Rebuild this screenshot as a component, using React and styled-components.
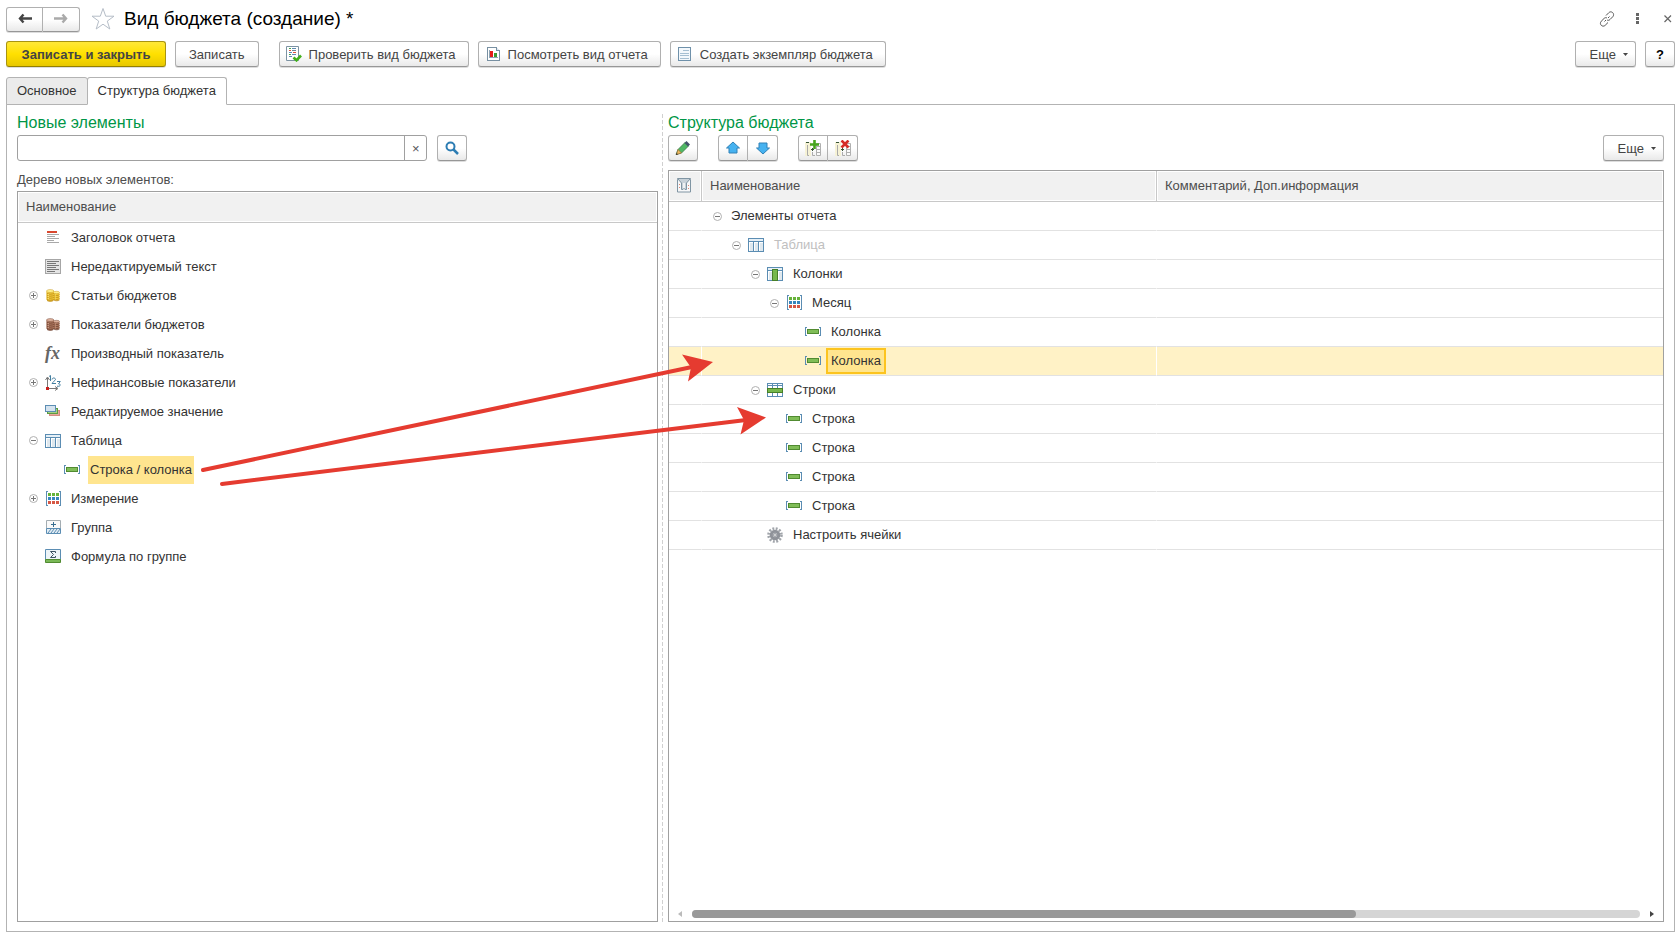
import React, { useState } from "react";
import styled, { createGlobalStyle } from "styled-components";

const COLORS = {
  text: "#333333",
  button: "#444444",
  muted: "#4d4d4d",
  green: "#009646",
  border: "#a0a0a0",
  frame: "#b3b3b3",
  line: "#e2e2e2",
  blue: "#5b8db3",
  arrow: "#e53b30",
};

const newItems = [
  { label: "Заголовок отчета", icon: "title" },
  { label: "Нередактируемый текст", icon: "text" },
  { label: "Статьи бюджетов", icon: "gold", toggle: "plus" },
  { label: "Показатели бюджетов", icon: "bronze", toggle: "plus" },
  { label: "Производный показатель", icon: "fx" },
  { label: "Нефинансовые показатели", icon: "axes", toggle: "plus" },
  { label: "Редактируемое значение", icon: "layers" },
  { label: "Таблица", icon: "table", toggle: "minus" },
  { label: "Строка / колонка", icon: "cell", level: 1, marked: true },
  { label: "Измерение", icon: "dimension", toggle: "plus" },
  { label: "Группа", icon: "group" },
  { label: "Формула по группе", icon: "sum" },
];

const structure = [
  { label: "Элементы отчета", toggle: "minus", level: 0 },
  { label: "Таблица", icon: "table", toggle: "minus", level: 1, dim: true },
  { label: "Колонки", icon: "columns", toggle: "minus", level: 2 },
  { label: "Месяц", icon: "dimension", toggle: "minus", level: 3 },
  { label: "Колонка", icon: "cell", level: 4 },
  { label: "Колонка", icon: "cell", level: 4 },
  { label: "Строки", icon: "rows", toggle: "minus", level: 2 },
  { label: "Строка", icon: "cell", level: 3 },
  { label: "Строка", icon: "cell", level: 3 },
  { label: "Строка", icon: "cell", level: 3 },
  { label: "Строка", icon: "cell", level: 3 },
  { label: "Настроить ячейки", icon: "gear", level: 2 },
];

const Coins = ({ light, mid, dark }) => (
  <>
    <path d="M8.500 4.500v7c1 1.500 5 1.500 6 0v-7z" fill={mid} />
    <path d="M8.500 6.500c1 1.300 5 1.300 6 0M8.500 8.500c1 1.300 5 1.300 6 0M8.500 10.500c1 1.300 5 1.300 6 0M9 12c1 1 4.500 1 5.500 0" stroke={dark} fill="none" strokeWidth="0.8" />
    <ellipse cx="11.500" cy="4.500" rx="3" ry="1.200" fill={light} stroke={dark} strokeWidth="0.4" />
    <path d="M1.500 3v8.500c1 2.500 6.500 2.500 7.500 0V3z" fill={mid} />
    <path d="M1.500 5c1 1.600 6.500 1.600 7.500 0M1.500 7c1 1.600 6.500 1.600 7.500 0M1.500 9c1 1.600 6.500 1.600 7.500 0M1.500 11c1 1.600 6.500 1.600 7.500 0M2 12.500c1.500 1 5 1 6.500 0" stroke={dark} fill="none" strokeWidth="0.8" />
    <ellipse cx="5.200" cy="3" rx="3.700" ry="1.500" fill={light} stroke={dark} strokeWidth="0.4" />
    <path d="M3.500 6v6M10.500 6.500v5" stroke={light} opacity="0.7" strokeDasharray="1.200 0.800" />
  </>
);

const TableBase = () => (
  <>
    <path d="M0.500 1.500h15v13h-15z" fill="#fff" stroke={COLORS.blue} />
    <path d="M1 2h14v2H1z" fill="#e6f0f7" />
    <path d="M2 6h3v8H2zM7 6h3v8H7zM12 6h3v8h-3z" fill="#dfe8ee" />
    <path d="M1 4.500h14M5.500 5v9M10.500 5v9" stroke={COLORS.blue} />
  </>
);

const TreeSheet = () => (
  <>
    <path d="M0 2h6v14H0z" fill="#f6f2d6" />
    <path d="M1 2.500h3M6 9.500h3M7.500 8v3" stroke="#355335" />
    <path d="M2.500 5v10.500H4M7.500 12v3.500H10" fill="none" stroke="#aaa" />
    <path d="M11.500 3.500h4v12h-4zM11 6.500h5M11 9.500h5M11 12.500h5" fill="#fafafa" stroke="#b0b0b0" />
  </>
);

// pixel-aligned icons
const drawings = {
  title: (
    <>
      <path d="M2 1h10v2H2z" fill="#d9482f" />
      <path d="M2 4.500h12M2 6.500h8M2 8.500h12M2 10.500h7M2 12.500h12" stroke="#a9a9a9" />
    </>
  ),
  text: (
    <>
      <path d="M0.500 0.500h15v14h-15z" fill="#e4e4e4" stroke="#a6a6a6" />
      <path d="M2 2.500h12M2 4.500h9M2 6.500h12M2 8.500h9M2 10.500h12M2 12.500h8" stroke="#777" />
    </>
  ),
  layers: (
    <>
      <path d="M4.500 6.500h10v5h-10z" fill="#e7a99d" stroke="#d38d82" />
      <path d="M2.500 4.500h10v5h-10z" fill="#a5cf83" stroke="#5d9b41" />
      <path d="M0.500 1.500h10v6h-10z" fill="#d5e3ef" stroke={COLORS.blue} />
    </>
  ),
  table: <TableBase />,
  columns: (
    <>
      <TableBase />
      <path d="M5.500 3.500h5v11h-5z" fill="#76b84c" stroke="#477f28" />
    </>
  ),
  rows: (
    <>
      <path d="M0.500 1.500h15v13h-15z" fill="#fff" stroke={COLORS.blue} />
      <path d="M1 3.500h14M5.500 2v12M10.500 2v12" stroke={COLORS.blue} />
      <path d="M0.500 6.500h15v4h-15z" fill="#76b84c" stroke="#477f28" />
    </>
  ),
  cell: (
    <>
      <path d="M2 3.500H0.500v8H2M14 3.500h1.500v8H14" fill="none" stroke={COLORS.blue} />
      <path d="M2.500 5.500h11v4h-11z" fill="#80bd57" stroke="#518b31" />
    </>
  ),
  dimension: (
    <>
      <path d="M3 0.500H1.500v14H3M14 0.500h1.500v14H14" fill="none" stroke={COLORS.blue} />
      <path d="M3 2h3v3H3zM7 2h3v3H7zM11 2h3v3h-3z" fill="#66b33a" />
      <path d="M3 6h3v3H3zM7 6h3v3H7zM11 6h3v3h-3z" fill="#3786bd" />
      <path d="M3 10h3v3H3zM7 10h3v3H7zM11 10h3v3h-3z" fill="#d65744" />
    </>
  ),
  chart: (
    <>
      <path d="M2.500 1.500h9l3 3v10h-12z" fill="#fff" stroke="#7890a2" />
      <path d="M11.500 1.500v3h3" fill="#dce6ee" stroke="#7890a2" />
      <path d="M4.500 4v7h8" fill="none" stroke="#8fa5b5" />
      <path d="M5 5h3v6H5z" fill="#e61e19" />
      <path d="M9 7h3v4H9z" fill="#3c9c32" />
    </>
  ),
  sheet: (
    <>
      <path d="M1.500 1.500h12v13h-12z" fill="#f3f8fc" stroke="#6f91aa" />
      <path d="M6 4.500h6M3 7.500h9M3 9.500h9M3 12.500h9" stroke="#a5bfd2" />
    </>
  ),
};

const smooth = {
  gold: <Coins light="#fff08a" mid="#f4cd3c" dark="#b98512" />,
  bronze: <Coins light="#dcb09b" mid="#b37c63" dark="#673b2b" />,
  axes: (
    <>
      <path d="M2.500 13V3M3 13.500h9" stroke="#777" />
      <path d="M0.500 5l2-3 2 3M10 11.500l3 2-3 2" fill="none" stroke="#777" />
      <path d="M1 12h3v3H1z" fill="#c8201d" />
      <path d="M4 1.500l1.500-1V6" fill="none" stroke="#437e9f" />
      <path d="M7 4.500c0-2 3.500-2 3.500 0 0 1-3.500 3-3.500 4h4" fill="none" stroke="#437e9f" />
      <path d="M12 6.500h3.300l-1.800 2.300c2.500 0 2.500 3.200-1.500 2.400" fill="none" stroke="#437e9f" />
    </>
  ),
  group: (
    <>
      <path d="M1.500 0.500h14v8h-14z" fill="#fafafa" stroke="#a4adb2" />
      <path d="M8.500 2v5M6 4.500h5" stroke="#386e91" />
      <path d="M1.500 8.500h14v5h-14z" fill="#e3edf4" stroke={COLORS.blue} />
      <path d="M3 13l3-4M6 13l3-4M9 13l3-4M12 13l3-4" stroke={COLORS.blue} />
    </>
  ),
  sum: (
    <>
      <path d="M0.500 0.500h15v10h-15z" fill="#edf4f8" stroke={COLORS.blue} />
      <path d="M10.500 4V2.500H5.500l3 3-3 3h5V7" fill="none" stroke="#3c5362" />
      <path d="M0.500 10.500h15v3h-15z" fill="#79b856" stroke="#518b31" />
    </>
  ),
  check: (
    <>
      <path d="M0.500 0.500h12v14h-12z" fill="#fff" stroke="#7c93a3" />
      <path d="M3 2.500h2M3 8.500h2" stroke="#46a447" />
      <path d="M6 2.500h4M3 6.500h3M6 8.500h4M3 10.500h3" stroke="#5f8bb1" />
      <path d="M3 4.500h2M7 6.500h3" stroke="#e0523c" />
      <path d="M6 4.500h4" stroke="#6f8799" />
      <path d="M7.500 11.500l3 2.800 4.500-4.800" fill="none" stroke="#43b01c" strokeWidth="2.600" />
    </>
  ),
  funnel: (
    <>
      <path d="M1.500 2.500h13v12.500h-13z" fill="#f7f8f9" stroke="#8095a3" />
      <path d="M1.500 1.500h13l-4 4.500v6.500h-1.500l-1-1-1 1H5.500V6z" fill="#c7d1d8" stroke="#8095a3" />
      <path d="M7 6h2v5H7z" fill="#f0f2f3" />
      <path d="M3 7h1v1H3zM3 10h1v1H3zM12 8h1v1h-1zM12 11h1v1h-1z" fill="#e08673" />
    </>
  ),
  addTree: (
    <>
      <TreeSheet />
      <path d="M9.500 0v9M5 4.500h9" stroke="#46a51d" strokeWidth="2.600" />
    </>
  ),
  removeTree: (
    <>
      <TreeSheet />
      <path d="M6.500 0.500l7 7M13.500 0.500l-7 7" stroke="#d62c27" strokeWidth="2.600" />
    </>
  ),
  pencil: (
    <>
      <path d="M1 14.500l2-5 7-7 3.500 3.500-7 7z" fill="#4fb865" stroke="#3c774a" strokeWidth="0.800" />
      <path d="M9.500 3l2-2 3.500 3.500-2 2z" fill="#42536b" />
      <path d="M3 9.500l3.500 3.500-5 1.500z" fill="#f0b85f" stroke="#9b7138" strokeWidth="0.700" />
      <path d="M1 15l0.500-2 1.500 1.500z" fill="#333" />
    </>
  ),
  up: <path d="M8 2l6.500 6H12v5H4V8H1.500z" fill="#46b2f0" stroke="#3081b7" />,
  down: <path d="M8 14L1.500 8H4V3h8v5h2.500z" fill="#46b2f0" stroke="#3081b7" />,
  search: (
    <>
      <circle cx="6.500" cy="6.500" r="4" fill="none" stroke="#2d7db3" strokeWidth="2" />
      <path d="M9.500 9.500l4.500 4.500" stroke="#2d7db3" strokeWidth="2.500" />
    </>
  ),
  gear: (
    <>
      <circle cx="8" cy="8" r="6.500" fill="none" stroke="#a1a5ab" strokeWidth="2.600" strokeDasharray="1.900 1.500" />
      <circle cx="8" cy="8" r="3.800" fill="#c5c8cc" stroke="#8f9299" strokeWidth="3" />
      <circle cx="8" cy="8" r="1.500" fill="#e3e3e3" stroke="#a0a3a9" />
    </>
  ),
  back: <path d="M6.500 3.500L3 7.500l3.500 4M3 7.500h12" fill="none" stroke="#444" strokeWidth="2.400" />,
  forward: <path d="M9.500 3.500l3.500 4-3.500 4M13 7.500H1" fill="none" stroke="#aaa" strokeWidth="2.400" />,
  link: (
    <path
      d="M7 4.500l2.800-2.800c2.500-2.500 6.500 1 4 4L11 8.500c-1 1-2 1-3 0.500M9 11.500l-2.800 2.800c-2.500 2.500-6.500-1-4-4L5 7.500c1-1 2-1 3-0.500M5.500 10.500l1.500-1.500M9 7l1.500-1.500"
      fill="none"
      stroke="#555"
    />
  ),
  dots: <path d="M7 2h3v3H7zM7 6h3v3H7zM7 10h3v3H7z" fill="#666" />,
  close: <path d="M5.500 4.500l6.500 6.500M12 4.500L5.500 11" stroke="#666" strokeWidth="1.200" />,
};

const Icon = ({ name }) => {
  if (name === "fx") {
    return <Fx>fx</Fx>;
  }
  return (
    <Svg
      viewBox="0 0 16 16"
      shapeRendering={drawings[name] ? "crispEdges" : "auto"}
      aria-hidden="true"
    >
      {drawings[name] || smooth[name]}
    </Svg>
  );
};

const Toggle = ({ kind }) => (
  <PlainButton aria-label={kind === "plus" ? "Развернуть" : "Свернуть"}>
    <svg width="9" height="9" viewBox="0 0 9 9">
      <circle cx="4.500" cy="4.500" r="4" fill="#fff" stroke="#b0b0b0" />
      <path d={kind === "plus" ? "M2 4.500h5M4.500 2v5" : "M2 4.500h5"} stroke="#777" />
    </svg>
  </PlainButton>
);

const TreeNode = ({ item, current }) => (
  <Node $level={item.level || 0}>
    <ToggleSlot>{item.toggle && <Toggle kind={item.toggle} />}</ToggleSlot>
    {item.icon && <Icon name={item.icon} />}
    <NodeText
      $marked={item.marked}
      $dim={item.dim}
      $current={current}
      $bare={!item.icon}
    >
      {item.label}
    </NodeText>
  </Node>
);

const MoreButton = () => (
  <Button $more>
    Еще
    <Caret viewBox="0 0 5 3" aria-hidden="true">
      <path d="M0 0h5L2.500 3z" fill="#444" />
    </Caret>
  </Button>
);

const App = () => {
  const [search, setSearch] = useState("");
  const [selected, setSelected] = useState(5);

  return (
    <Page>
      <GlobalStyle />
      <Header>
        <ButtonGroup>
          <NavButton aria-label="Назад">
            <Icon name="back" />
          </NavButton>
          <NavButton aria-label="Вперед">
            <Icon name="forward" />
          </NavButton>
        </ButtonGroup>
        <StarButton aria-label="В избранное">
          <svg width="24" height="24" viewBox="0 0 24 24">
            <path
              d="M12 1.500l2.700 7.700h8.300l-6.700 4.900 2.500 7.900-6.800-4.800-6.800 4.800 2.500-7.900L1 9.200h8.300z"
              fill="#fff"
              stroke="#b5bdc7"
            />
          </svg>
        </StarButton>
        <Title>Вид бюджета (создание) *</Title>
        <WindowTools>
          <PlainButton aria-label="Ссылка">
            <Icon name="link" />
          </PlainButton>
          <PlainButton aria-label="Меню">
            <Icon name="dots" />
          </PlainButton>
          <PlainButton aria-label="Закрыть">
            <Icon name="close" />
          </PlainButton>
        </WindowTools>
      </Header>

      <CommandBar>
        <Button $primary>Записать и закрыть</Button>
        <Button>Записать</Button>
        <Spacer />
        <Button $withIcon>
          <Icon name="check" />
          Проверить вид бюджета
        </Button>
        <Button $withIcon>
          <Icon name="chart" />
          Посмотреть вид отчета
        </Button>
        <Button $withIcon>
          <Icon name="sheet" />
          Создать экземпляр бюджета
        </Button>
        <Filler />
        <MoreButton />
        <SquareButton aria-label="Справка">?</SquareButton>
      </CommandBar>

      <Tabs role="tablist">
        <Tab role="tab" aria-selected="false">
          Основное
        </Tab>
        <Tab role="tab" aria-selected="true" $active>
          Структура бюджета
        </Tab>
      </Tabs>

      <Panel>
        <LeftPane>
          <Heading>Новые элементы</Heading>
          <SearchRow>
            <SearchBox>
              <SearchInput
                type="text"
                aria-label="Поиск новых элементов"
                value={search}
                onChange={(ev) => setSearch(ev.target.value)}
              />
              <ClearButton aria-label="Очистить" onClick={() => setSearch("")}>
                ×
              </ClearButton>
            </SearchBox>
            <SquareButton aria-label="Найти">
              <Icon name="search" />
            </SquareButton>
          </SearchRow>
          <Caption id="tree-caption">Дерево новых элементов:</Caption>
          <TableBox>
            <Table aria-labelledby="tree-caption">
              <thead>
                <tr>
                  <Th>Наименование</Th>
                </tr>
              </thead>
              <tbody>
                {newItems.map((item) => (
                  <tr key={item.label}>
                    <Td>
                      <TreeNode item={item} />
                    </Td>
                  </tr>
                ))}
              </tbody>
            </Table>
          </TableBox>
        </LeftPane>

        <Splitter />

        <RightPane>
          <Heading>Структура бюджета</Heading>
          <ToolRow>
            <SquareButton aria-label="Изменить">
              <Icon name="pencil" />
            </SquareButton>
            <ButtonGroup>
              <SquareButton aria-label="Вверх">
                <Icon name="up" />
              </SquareButton>
              <SquareButton aria-label="Вниз">
                <Icon name="down" />
              </SquareButton>
            </ButtonGroup>
            <ButtonGroup>
              <SquareButton aria-label="Добавить">
                <Icon name="addTree" />
              </SquareButton>
              <SquareButton aria-label="Удалить">
                <Icon name="removeTree" />
              </SquareButton>
            </ButtonGroup>
            <Filler />
            <MoreButton />
          </ToolRow>
          <TableBox>
            <Table>
              <colgroup>
                <MarkCol />
                <NameCol />
                <col />
              </colgroup>
              <thead>
                <tr>
                  <Th $mark>
                    <Icon name="funnel" />
                  </Th>
                  <Th $divided>Наименование</Th>
                  <Th $divided>Комментарий, Доп.информация</Th>
                </tr>
              </thead>
              <tbody>
                {structure.map((item, i) => (
                  <Row
                    key={i}
                    $selected={i === selected}
                    onClick={() => setSelected(i)}
                  >
                    <Td $lined />
                    <Td $lined>
                      <TreeNode item={item} current={i === selected} />
                    </Td>
                    <Td $lined />
                  </Row>
                ))}
              </tbody>
            </Table>
            <ScrollBar>
              <ScrollArrow viewBox="0 0 4 6" aria-hidden="true">
                <path d="M4 0v6L0 3z" fill="#bbb" />
              </ScrollArrow>
              <Track>
                <Thumb />
              </Track>
              <ScrollArrow viewBox="0 0 4 6" aria-hidden="true">
                <path d="M0 0v6l4-3z" fill="#444" />
              </ScrollArrow>
            </ScrollBar>
          </TableBox>
        </RightPane>
      </Panel>

      <Arrows viewBox="0 0 800 500" aria-hidden="true">
        <path d="M203 470L692 367M222 484L746 420" stroke={COLORS.arrow} strokeWidth="4" strokeLinecap="round" />
        <path d="M713 362L682 354.500 691 367.500 688 381.500zM766 417.500L737 407 744 420 740.500 434.500z" fill={COLORS.arrow} />
      </Arrows>
    </Page>
  );
};

const GlobalStyle = createGlobalStyle`
  * {
    box-sizing: border-box;
  }
  body {
    margin: 0;
    background: #fff;
  }
  body, button, input {
    font-family: "Liberation Sans", Arial, sans-serif;
    font-size: 13px;
    color: ${COLORS.text};
  }
`;

const Page = styled.div`
  position: relative;
  min-height: 100vh;
  display: flex;
  flex-direction: column;
  padding: 6px 5px 12px 6px;
`;

const Header = styled.header`
  display: flex;
  align-items: center;
  height: 26px;
`;

const Title = styled.h1`
  margin: 0 0 0 9px;
  font-size: 19px;
  font-weight: normal;
  color: #000;
`;

const PlainButton = styled.button`
  display: flex;
  padding: 0;
  border: none;
  background: none;
`;

const StarButton = styled(PlainButton)`
  margin-left: 11px;
`;

const WindowTools = styled.div`
  display: flex;
  gap: 14px;
  margin-left: auto;
`;

const CommandBar = styled.div`
  display: flex;
  gap: 9px;
  margin-top: 9px;
`;

const Spacer = styled.div`
  width: 2px;
`;

const Filler = styled.div`
  flex: 1;
`;

const Button = styled.button`
  display: flex;
  align-items: center;
  justify-content: center;
  gap: 7px;
  height: 26px;
  min-width: ${(p) => (p.$primary ? "160px" : "0")};
  padding: ${(p) => (p.$more ? "0 7px 0 14px" : p.$withIcon ? "0 12px 0 6px" : "0 13px")};
  border: 1px solid ${(p) => (p.$primary ? "#a89410" : "#b0b0b0")};
  border-bottom-color: ${(p) => (p.$primary ? "#948000" : "#979797")};
  border-radius: 3px;
  background: ${(p) =>
    p.$primary
      ? "linear-gradient(#ffe838, #ffe000 50%, #e8c800)"
      : "linear-gradient(#fff 50%, #e9e9e9)"};
  box-shadow: 0 1px 0 #ddd;
  color: ${COLORS.button};
  font-weight: ${(p) => (p.$primary ? "bold" : "normal")};
  white-space: nowrap;
`;

const SquareButton = styled(Button)`
  width: 30px;
  padding: 0;
  color: #000;
  font-weight: bold;
`;

const NavButton = styled(SquareButton)`
  width: 37px;
  height: 25px;
`;

const ButtonGroup = styled.div`
  display: flex;

  & > button:first-child {
    border-radius: 3px 0 0 3px;
  }
  & > button:last-child {
    border-left: none;
    border-radius: 0 3px 3px 0;
  }
`;

const Caret = styled.svg`
  width: 5px;
  height: 3px;
`;

const Svg = styled.svg`
  display: block;
  flex: none;
  width: 16px;
  height: 16px;
`;

const Fx = styled.span`
  width: 16px;
  font: italic bold 18px "Liberation Serif", serif;
  color: #666;
`;

const Tabs = styled.div`
  display: flex;
  margin-top: 10px;
`;

const Tab = styled.button`
  height: 28px;
  margin-bottom: -1px;
  padding: 0 10px 2px;
  border: 1px solid ${COLORS.frame};
  border-bottom-color: ${(p) => (p.$active ? "#fff" : COLORS.frame)};
  border-radius: 3px 3px 0 0;
  background: ${(p) => (p.$active ? "#fff" : "#ebebeb")};
  position: relative;

  & + & {
    margin-left: -1px;
  }
`;

const Panel = styled.main`
  flex: 1;
  display: flex;
  padding: 9px 10px 9px;
  border: 1px solid ${COLORS.frame};
`;

const LeftPane = styled.section`
  flex: 641 1 0;
  min-width: 0;
  display: flex;
  flex-direction: column;
`;

const RightPane = styled.section`
  flex: 996 1 0;
  min-width: 0;
  display: flex;
  flex-direction: column;
`;

const Splitter = styled.div`
  width: 1px;
  margin: 0 5px 0 4px;
  background: repeating-linear-gradient(#d0d0d0 0 4px, transparent 4px 6px);
`;

const Heading = styled.h2`
  margin: 0 0 3px;
  font-size: 16px;
  line-height: 18px;
  font-weight: normal;
  color: ${COLORS.green};
`;

const SearchRow = styled.div`
  display: flex;
  gap: 10px;
`;

const SearchBox = styled.div`
  display: flex;
  width: 64%;
  height: 26px;
  border: 1px solid ${COLORS.border};
  border-radius: 3px;
`;

const SearchInput = styled.input`
  flex: 1;
  min-width: 0;
  border: none;
  outline: none;
  background: none;
`;

const ClearButton = styled.button`
  width: 22px;
  padding: 0;
  border: none;
  border-left: 1px solid ${COLORS.border};
  background: none;
  color: #555;
`;

const Caption = styled.div`
  margin: 10px 0 3px;
  line-height: 17px;
  color: ${COLORS.muted};
`;

const ToolRow = styled.div`
  display: flex;
  gap: 20px;
  margin-bottom: 9px;
`;

const TableBox = styled.div`
  flex: 1;
  display: flex;
  flex-direction: column;
  border: 1px solid ${COLORS.border};
`;

const Table = styled.table`
  width: 100%;
  table-layout: fixed;
  border-spacing: 0;
`;

const MarkCol = styled.col`
  width: 32px;
`;

const NameCol = styled.col`
  width: 455px;
`;

const Th = styled.th`
  height: 31px;
  padding: ${(p) => (p.$mark ? "0 7px 2px" : "0 8px 2px")};
  border-bottom: 1px solid #c8c8c8;
  border-left: ${(p) => (p.$divided ? "1px solid #c8c8c8" : "none")};
  background: #f1f1f1;
  box-shadow: inset 0 0 0 1px #fff;
  color: ${COLORS.muted};
  font-weight: normal;
  text-align: left;
`;

const Td = styled.td`
  height: 29px;
  padding: 0;
  border-bottom: ${(p) => (p.$lined ? `1px solid ${COLORS.line}` : "none")};
`;

const Row = styled.tr`
  background: ${(p) => (p.$selected ? "#fff2c6" : "none")};

  & td + td {
    border-left: 1px solid ${(p) => (p.$selected ? "#fff" : "transparent")};
  }
`;

const Node = styled.div`
  display: flex;
  align-items: center;
  height: 28px;
  padding-left: ${(p) => p.$level * 19 + 8}px;
`;

const ToggleSlot = styled.span`
  display: flex;
  justify-content: center;
  width: 15px;
  margin-right: 4px;
`;

const NodeText = styled.span`
  margin-left: ${(p) => (p.$bare ? "0" : p.$current ? "5px" : "8px")};
  padding: ${(p) => (p.$current ? "0 3px" : "0 2px")};
  border: ${(p) => (p.$current ? "2px solid #fcc41f" : "none")};
  background: ${(p) => (p.$marked || p.$current ? "#ffe58f" : "none")};
  color: ${(p) => (p.$dim ? "#c0c0c0" : COLORS.text)};
  line-height: ${(p) => (p.$current ? "22px" : "28px")};
`;

const ScrollBar = styled.div`
  display: flex;
  align-items: center;
  gap: 10px;
  margin: auto 9px 3px;
`;

const ScrollArrow = styled.svg`
  width: 4px;
  height: 6px;
`;

const Track = styled.div`
  flex: 1;
  height: 8px;
  border-radius: 4px;
  background: #d5d5d5;
`;

const Thumb = styled.div`
  width: 70%;
  height: 8px;
  border-radius: 4px;
  background: #999;
`;

// drawn over both panes, points from the new item to its places in the structure
const Arrows = styled.svg`
  position: absolute;
  top: 0;
  left: 0;
  width: 800px;
  height: 500px;
  fill: none;
  pointer-events: none;
`;

export default App;
